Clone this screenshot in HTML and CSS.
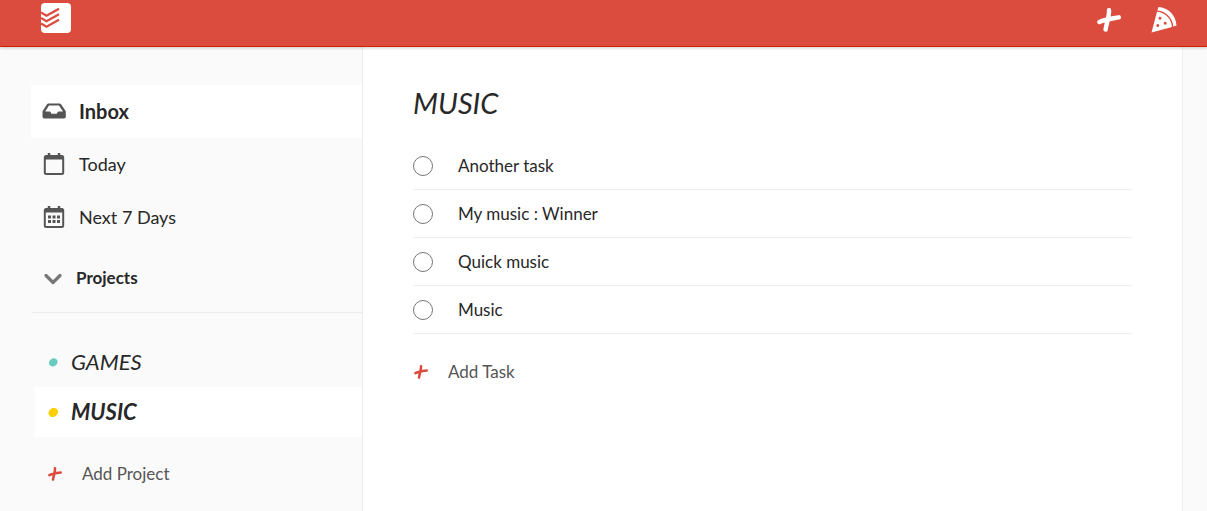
FILE: index.html
```html
<!DOCTYPE html>
<html lang="en">
<head>
<meta charset="utf-8">
<meta name="viewport" content="width=device-width, initial-scale=1">
<title>MUSIC</title>
<link rel="stylesheet" href="styles.css">
</head>
<body>
<svg class="defs" aria-hidden="true">
  <symbol id="plus" viewBox="0 0 24 24">
    <path d="M12 2.200C12.500 8 9.500 15 8.600 21.600M2.400 14C8 11.500 15 10.600 21.800 9.300" fill="none" stroke="currentColor" stroke-width="4.400" stroke-linecap="round"/>
  </symbol>
</svg>
<header class="topbar">
  <a class="logo" href="#" aria-label="Home">
    <svg width="30" height="30" viewBox="0 0 30 30"><rect width="30" height="30" rx="4" fill="#fff"/><path d="M0 9.500l5.500 3.200L18 5.800M0 15l5.500 3.200L18 11.300M0 20.500l5.500 3.200L18 16.800" fill="none" stroke="#db4c3f" stroke-width="2.200"/></svg>
  </a>
  <nav class="actions">
    <button class="icon-button" aria-label="Quick add"><svg width="24" height="24"><use href="#plus"/></svg></button>
    <button class="icon-button" aria-label="Menu">
      <svg width="26" height="26" viewBox="0 0 26 26"><path d="M7.500 0C17 .5 25 8 25.500 18.500L22.300 19.400C21.500 10.500 15 4.500 6.300 3.600Z" fill="#fff"/><path fill-rule="evenodd" d="M6 4.800C14 5.400 20.400 11.500 21 20L.5 25.500ZM9 9.800a1.500 1.500 0 1 0 .01 0ZM14.200 14.700a1.500 1.500 0 1 0 .01 0ZM6.800 17a1.500 1.500 0 1 0 .01 0Z" fill="#fff"/></svg>
    </button>
  </nav>
</header>
<div class="page">
  <aside class="sidebar">
    <nav class="filters">
      <a class="filter selected" href="#">
        <svg width="24" height="24" viewBox="0 0 24 24"><path fill-rule="evenodd" d="M6.500 4.500h11q1 0 1.600.8l4.200 6.200q.5.700.5 1.500v4.800q0 1.700-1.700 1.700H2.200Q.5 19.500.5 17.800V13q0-.8.5-1.500l4-6.200q.5-.8 1.500-.8ZM7 6.500 3.200 12.500H7.500q1 0 1.300 1l.3.700q.3.600 1 .6h4q.7 0 1-.6l.3-.7q.3-1 1.300-1h4.300L17 6.500Z" fill="#555"/></svg>
        Inbox
      </a>
      <a class="filter" href="#">
        <svg width="24" height="24" viewBox="0 0 24 24"><path d="M7 1v4M17 1v4" stroke="#555" stroke-width="2.500"/><rect x="2.800" y="4" width="18.400" height="18" rx="1.500" fill="none" stroke="#555" stroke-width="2"/><path d="M3 5.500h18" stroke="#555" stroke-width="4"/></svg>
        Today
      </a>
      <a class="filter" href="#">
        <svg width="24" height="24" viewBox="0 0 24 24"><path d="M7 1v4M17 1v4" stroke="#555" stroke-width="2.500"/><rect x="2.800" y="4" width="18.400" height="18" rx="1.500" fill="none" stroke="#555" stroke-width="2"/><path d="M3 5.500h18" stroke="#555" stroke-width="4"/><path d="M6 12h12M6 16.500h12" stroke="#555" stroke-width="3" stroke-dasharray="3 1.500"/></svg>
        Next 7 Days
      </a>
    </nav>
    <button class="section-toggle" aria-expanded="true">
      <svg width="20" height="20" viewBox="0 0 20 20"><path d="M3 7.500l7 7 7-7" fill="none" stroke="#777" stroke-width="3.200" stroke-linecap="round" stroke-linejoin="round"/></svg>
      Projects
    </button>
    <nav class="projects">
      <a class="project" href="#"><svg width="10" height="10" viewBox="0 0 10 10"><ellipse cx="5" cy="5.500" rx="4.500" ry="3.900" fill="#6accbc" transform="rotate(-35 5 5)"/></svg>GAMES</a>
      <a class="project selected" href="#"><svg width="10" height="10" viewBox="0 0 10 10"><ellipse cx="5" cy="5.500" rx="5" ry="4.300" fill="#fad000" transform="rotate(-35 5 5)"/></svg>MUSIC</a>
    </nav>
    <button class="add add-project"><svg width="14" height="14"><use href="#plus"/></svg>Add Project</button>
  </aside>
  <main class="content">
    <h1>MUSIC</h1>
    <ul class="tasks">
      <li><label class="task"><input type="checkbox">Another task</label></li>
      <li><label class="task"><input type="checkbox">My music : Winner</label></li>
      <li><label class="task"><input type="checkbox">Quick music</label></li>
      <li><label class="task"><input type="checkbox">Music</label></li>
    </ul>
    <button class="add add-task"><svg width="14" height="14"><use href="#plus"/></svg>Add Task</button>
  </main>
</div>
</body>
</html>
```

FILE: styles.css
```css
* {
  box-sizing: border-box;
}

body {
  display: flex;
  flex-direction: column;
  min-height: 100vh;
  margin: 0;
  background: #fafafa;
  color: #282828;
  font: 17px/24px Lato, sans-serif;
}

a {
  color: inherit;
  text-decoration: none;
}

button {
  padding: 0;
  border: 0;
  background: none;
  color: inherit;
  font: inherit;
  cursor: pointer;
}

svg {
  display: block;
  flex: none;
}

.defs {
  position: absolute;
  width: 0;
  height: 0;
}

.topbar {
  display: flex;
  justify-content: space-between;
  align-items: flex-start;
  height: 47px;
  padding: 3px 30px 0 41px;
  border-bottom: 1px solid #cf2200;
  background: #db4c3f;
  box-shadow: 0 1px 3px rgba(0, 0, 0, 0.2);
  z-index: 1;
}

.actions {
  display: flex;
  align-items: center;
  gap: 30px;
  padding-top: 4px;
}

.icon-button {
  color: #fff;
}

.page {
  display: grid;
  grid-template-columns: 362px 1fr;
  flex: 1;
  padding-right: 24px;
}

.sidebar {
  padding: 38px 0 16px 31px;
}

.filter {
  display: flex;
  align-items: center;
  gap: 13px;
  height: 53px;
  padding: 0 0 2px 11px;
  font-size: 18px;
}

.selected {
  background: #fff;
  font-weight: 700;
}

.filter.selected {
  font-size: 20px;
}

.section-toggle {
  display: flex;
  align-items: center;
  gap: 13px;
  width: 100%;
  height: 69px;
  padding-left: 12px;
  border-bottom: 1px solid #eee;
  font-size: 17px;
  font-weight: 700;
}

.projects {
  display: flex;
  flex-direction: column;
  padding: 24px 0 0 4px;
}

.project {
  display: flex;
  align-items: center;
  gap: 13px;
  height: 50px;
  padding-left: 13px;
  font-size: 22px;
  font-style: italic;
}

.add {
  display: flex;
  align-items: center;
  gap: 20px;
  color: #555;
}

.add svg {
  color: #db4c3f;
}

.add-project {
  margin: 25px 0 0 17px;
}

.content {
  padding: 38px 50px 24px;
  border: 1px solid #eee;
  border-width: 0 1px;
  background: #fff;
}

h1 {
  margin: 0 0 21px;
  font-size: 29px;
  font-style: italic;
  font-weight: 400;
  line-height: 36px;
}

.tasks {
  margin: 0;
  padding: 0;
  list-style: none;
}

.task {
  display: flex;
  align-items: center;
  gap: 25px;
  height: 48px;
  border-bottom: 1px solid #eee;
}

.task input {
  appearance: none;
  width: 20px;
  height: 20px;
  margin: 0;
  border: 1px solid #777;
  border-radius: 50%;
  background: #fff;
}

.task input:checked {
  background: #777;
}

.add-task {
  margin: 26px 0 0 1px;
}
```
